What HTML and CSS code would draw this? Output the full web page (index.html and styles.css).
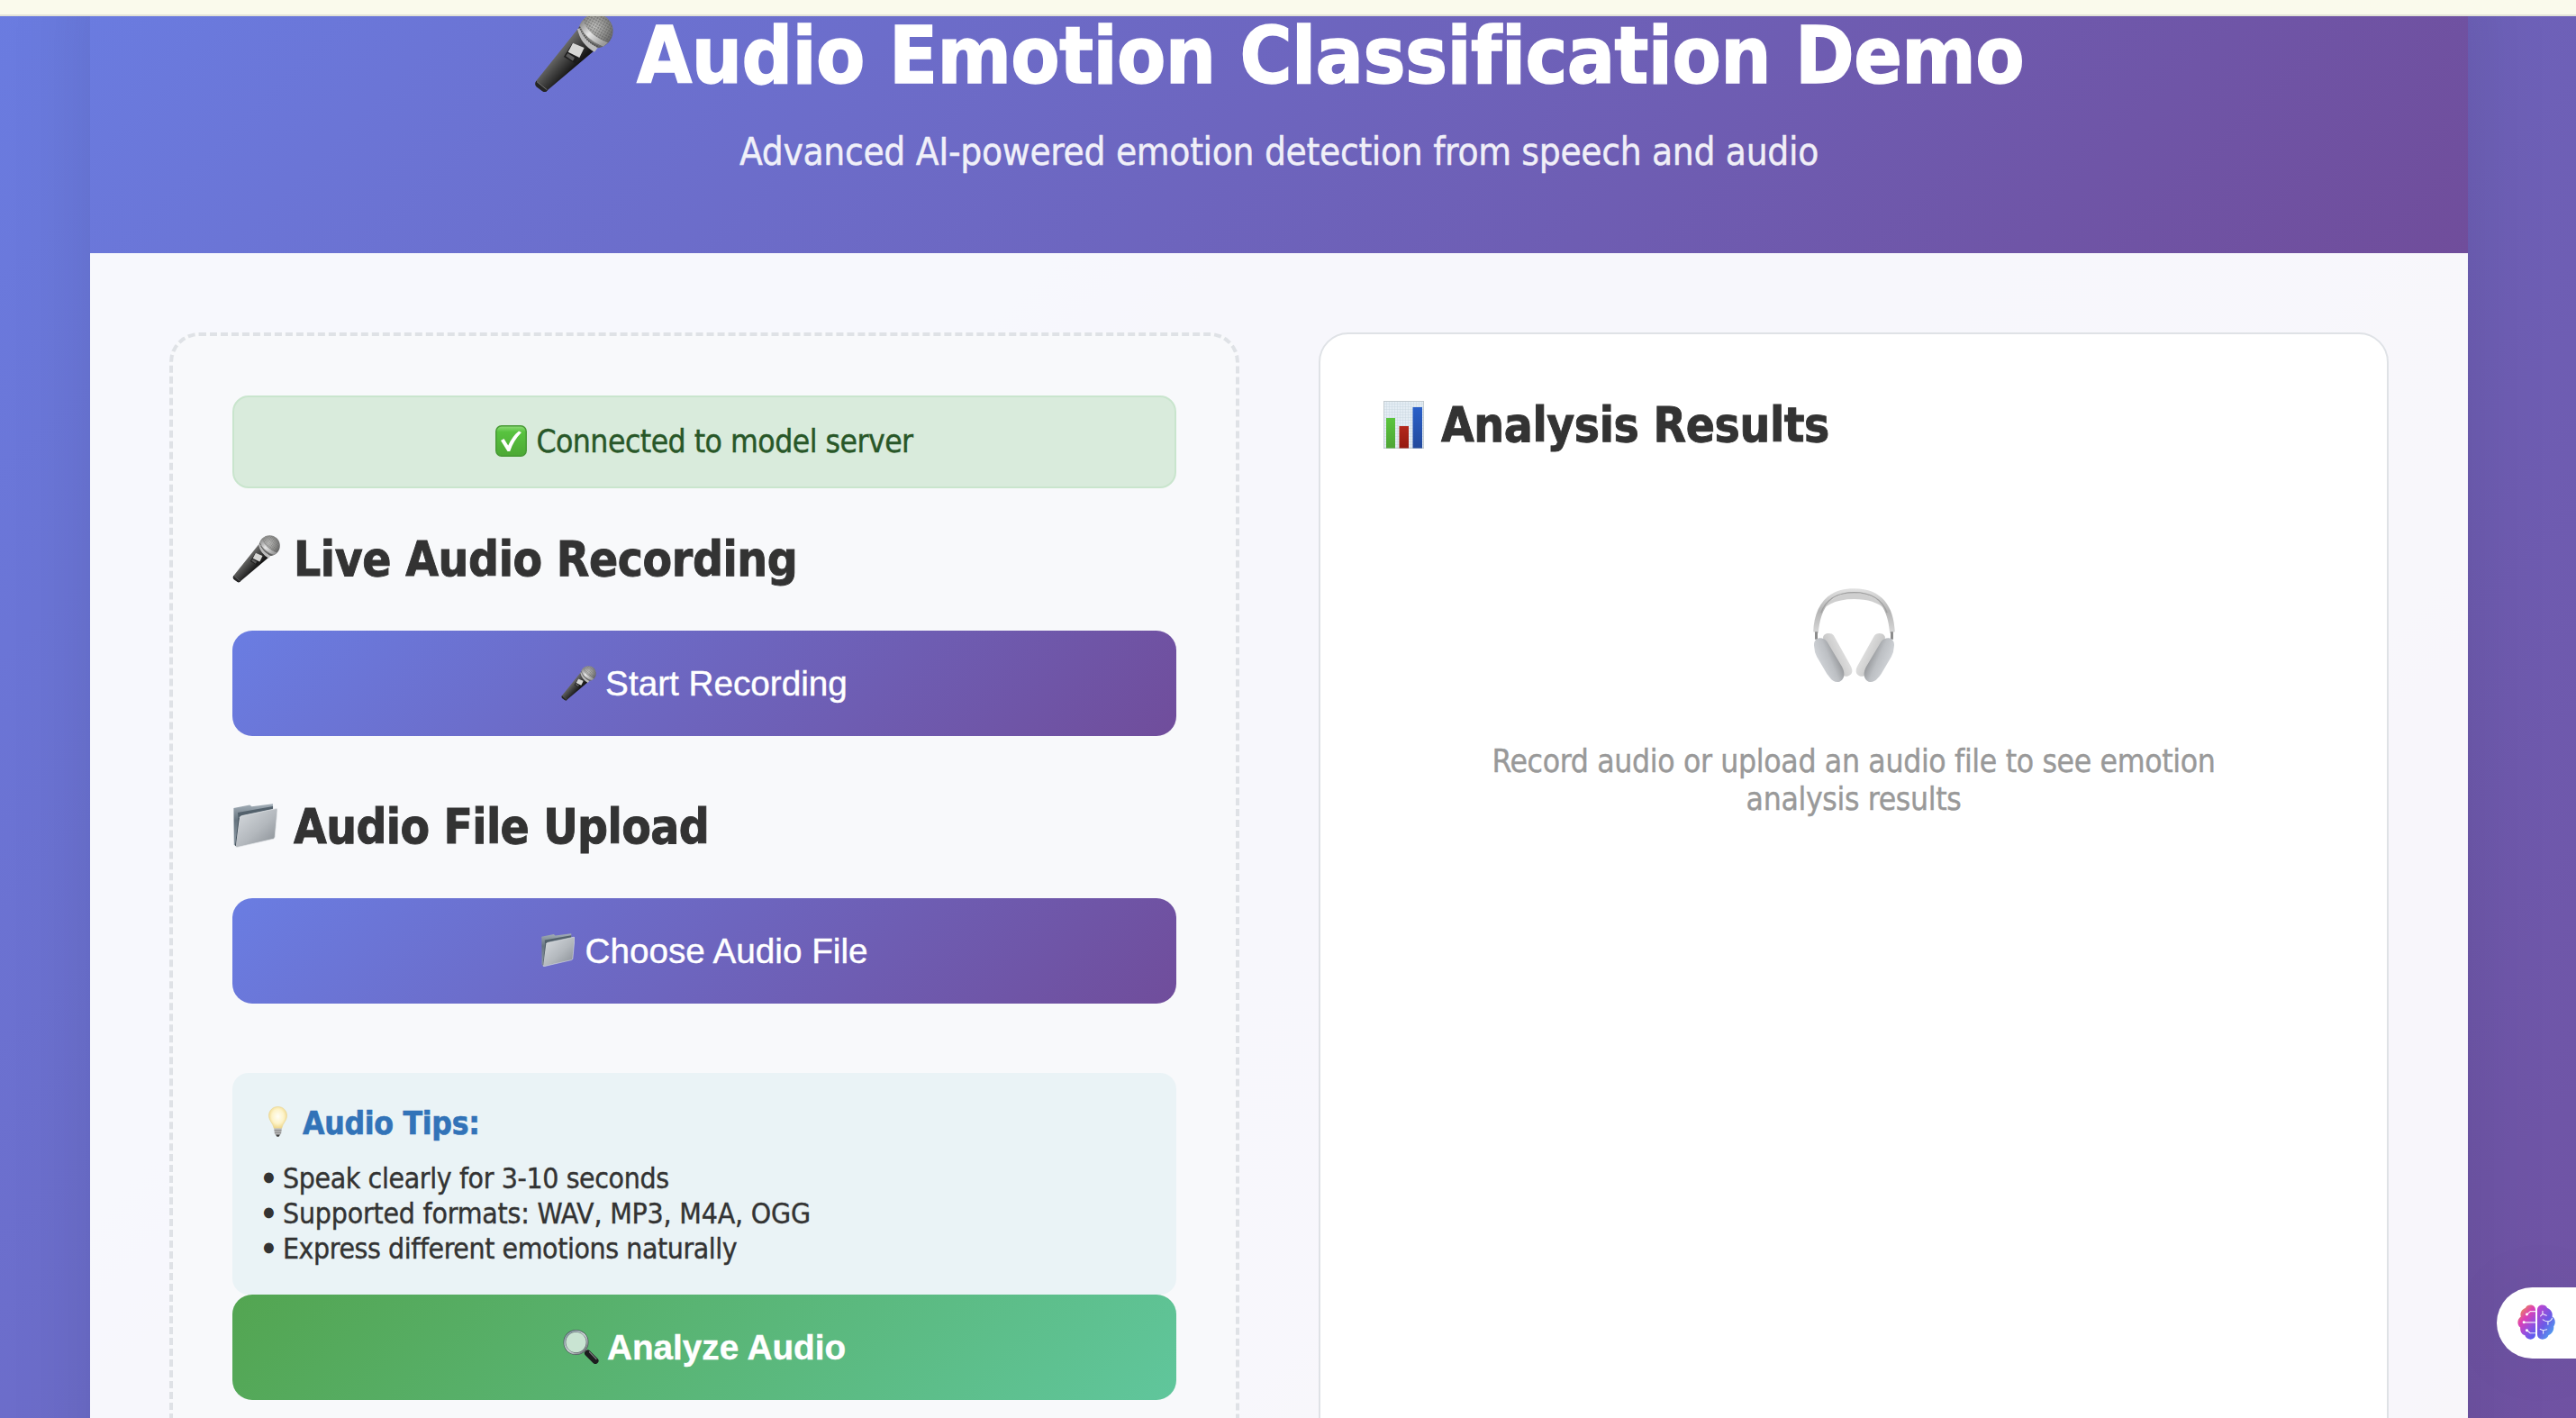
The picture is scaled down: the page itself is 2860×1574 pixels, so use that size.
FILE: index.html
```html
<!DOCTYPE html>
<html lang="en">
<head>
<meta charset="utf-8">
<title>Audio Emotion Classification Demo</title>
<link rel="stylesheet" href="styles.css">
</head>
<body>
<svg class="defs" width="0" height="0" aria-hidden="true">
  <defs>
    <linearGradient id="micBody" gradientUnits="userSpaceOnUse" x1="95" y1="165" x2="150" y2="215">
      <stop offset="0" stop-color="#6a6a68"/><stop offset=".35" stop-color="#4c4c4b"/><stop offset="1" stop-color="#161616"/>
    </linearGradient>
    <radialGradient id="micHead" gradientUnits="userSpaceOnUse" cx="235" cy="60" r="75">
      <stop offset="0" stop-color="#c2c2c0"/><stop offset=".6" stop-color="#8b8b89"/><stop offset="1" stop-color="#5e5e5e"/>
    </radialGradient>
    <linearGradient id="micRing" gradientUnits="userSpaceOnUse" x1="190" y1="45" x2="262" y2="120">
      <stop offset="0" stop-color="#8a8a8a"/><stop offset=".45" stop-color="#e6e6e6"/><stop offset="1" stop-color="#9a9a9a"/>
    </linearGradient>
    <pattern id="mesh" width="9" height="9" patternUnits="userSpaceOnUse" patternTransform="rotate(30)">
      <circle cx="3" cy="3" r="2.200" fill="#4b4b4b"/>
    </pattern>
    <linearGradient id="folderBack" x1="0" y1="0" x2="0" y2="1">
      <stop offset="0" stop-color="#a4afb8"/><stop offset=".4" stop-color="#66747f"/><stop offset="1" stop-color="#8f9ba5"/>
    </linearGradient>
    <linearGradient id="folderFront" x1="0" y1="0" x2="1" y2="1">
      <stop offset="0" stop-color="#d9dde1"/><stop offset=".55" stop-color="#b3b8bd"/><stop offset="1" stop-color="#858b91"/>
    </linearGradient>
    <symbol id="mic" viewBox="34 16 264 264">
      <path d="M184 62 L236 138 L80 270 Q72 281 61 274 L42 260 Q34 251 41 240 Z" fill="url(#micBody)"/>
      <path d="M41 240 L80 270 Q72 281 61 274 L42 260 Q34 251 41 240Z" fill="#252525"/>
      <path d="M43 243 L77 270" stroke="#777" stroke-width="3" fill="none"/>
      <circle cx="240" cy="74" r="57" fill="url(#micHead)"/>
      <circle cx="240" cy="74" r="56" fill="url(#mesh)"/>
      <path d="M197 37 Q214 88 280 113 L264 126 Q208 105 185 56Z" fill="url(#micRing)"/>
      <path d="M178 67 Q190 120 235 144 L246 130 Q204 110 188 66Z" fill="#bcbcbc"/>
      <path d="M185 60 Q202 108 249 128" stroke="#4b4b4b" stroke-width="5" stroke-dasharray="4 4" fill="none"/>
      <path d="M162 114 L202 130 L170 182 L133 160 Z" fill="#1b1b1b"/>
      <path d="M163 114 L201 130 L185 163 L147 144 Z" fill="#d6d6d4"/>
      <path d="M146 148 L169 163 L163 174 L139 158Z" fill="#5a5a5a"/>
    </symbol>
    <symbol id="folder" viewBox="19 32 49 49">
      <path d="M19.4 37 L37.3 33.4 L39.5 35.3 L63 32.3 L63.4 48 L23 78 L19.8 78Z" fill="url(#folderBack)"/>
      <path d="M24 42 L63 35 L63 46 L25 60Z" fill="#53616c"/>
      <path d="M28.5 45.6 L66.5 37.6 Q68.2 37.4 68 39 L65.2 69 Q65 70.6 63.5 71.2 L23 80.6 Q21 80.5 21.4 78 L26 48 Q26.5 46.1 28.500 45.600Z" fill="url(#folderFront)" stroke="#e6eaed" stroke-width=".7"/>
      <path d="M21.300 79 L25.300 48" stroke="#42505b" stroke-width="1"/>
    </symbol>
  </defs>
</svg>

<div class="browser-edge"></div>
<div class="page">
  <div class="container">
    <header class="header">
      <h1 class="title"><svg class="title-icon"><use href="#mic"/></svg><span>Audio Emotion Classification Demo</span></h1>
      <p class="subtitle">Advanced AI-powered emotion detection from speech and audio</p>
    </header>

    <main class="content">
      <section class="input-panel">
        <div class="status">
          <svg class="status-icon" viewBox="0 0 35 35">
            <defs><linearGradient id="tick" x1="0" y1="0" x2="0" y2="1"><stop offset="0" stop-color="#8fdc78"/><stop offset=".2" stop-color="#58c33f"/><stop offset="1" stop-color="#4ca834"/></linearGradient></defs>
            <rect x=".8" y=".8" width="33.400" height="33.400" rx="6" fill="url(#tick)" stroke="#479a35" stroke-width="1.500"/>
            <path d="M6 17 L9.500 15 L14.200 22.500 Q19 12 26 6.500 L29 8 Q20 17 16.200 29 L13.500 29 Z" fill="#fff"/>
          </svg>
          <span>Connected to model server</span>
        </div>

        <h2 class="heading"><svg class="heading-icon"><use href="#mic"/></svg><span>Live Audio Recording</span></h2>
        <button class="btn"><svg class="btn-icon"><use href="#mic"/></svg><span>Start Recording</span></button>

        <h2 class="heading heading-upload"><svg class="heading-icon folder"><use href="#folder"/></svg><span>Audio File Upload</span></h2>
        <button class="btn"><svg class="btn-icon folder"><use href="#folder"/></svg><span>Choose Audio File</span></button>

        <div class="tips">
          <h4 class="tips-title">
            <svg class="bulb" viewBox="0 0 21 34">
              <defs><radialGradient id="glow" cx=".5" cy=".45" r=".6"><stop offset="0" stop-color="#fffef6"/><stop offset=".55" stop-color="#fdf3c8"/><stop offset="1" stop-color="#ecd07a"/></radialGradient></defs>
              <path d="M10.500 .5 C16.500 .5 20.500 5 20.500 10.500 C20.500 16 15.500 19 14.800 24.500 L6.200 24.500 C5.500 19 .5 16 .5 10.500 C.5 5 4.500 .5 10.500 .5Z" fill="url(#glow)" stroke="#ead694" stroke-width=".7"/>
              <path d="M6.200 24.500 H14.800 L14 31 L12 32 H9 L7 31Z" fill="#b9b9b9"/>
              <path d="M6.500 26.800 H14.500 M6.800 29.300 H14.200" stroke="#838383" stroke-width=".9"/>
              <path d="M8 31.500 H13 L11.500 33.800 H9.500Z" fill="#3c3c3c"/>
            </svg>
            <span>Audio Tips:</span>
          </h4>
          <p class="tip tip-first"><span class="dot">•</span><span>Speak clearly for 3-10 seconds</span></p>
          <p class="tip tip-formats"><span class="dot">•</span><span>Supported formats: WAV, MP3, M4A, OGG</span></p>
          <p class="tip"><span class="dot">•</span><span>Express different emotions naturally</span></p>
        </div>

        <button class="btn btn-analyze">
          <svg class="btn-icon lens" viewBox="0 0 40 38">
            <defs><linearGradient id="rim" x1="0" y1="0" x2="1" y2="1"><stop offset="0" stop-color="#6f8d96"/><stop offset=".5" stop-color="#dde4e6"/><stop offset="1" stop-color="#5c6266"/></linearGradient></defs>
            <path d="M25 23 L29 27" stroke="#c9cdd0" stroke-width="4"/>
            <path d="M27.500 26 L36 34.500" stroke="#1d1d1f" stroke-width="7" stroke-linecap="round"/>
            <path d="M29.500 24.800 L37 32.500" stroke="#77777a" stroke-width="1.300" stroke-linecap="round"/>
            <circle cx="14.500" cy="14" r="12.600" fill="#c9e4d2" stroke="#51585d" stroke-width="2.800"/>
            <circle cx="14.500" cy="14" r="12.500" fill="none" stroke="url(#rim)" stroke-width="1.600"/>
          </svg>
          <span>Analyze Audio</span>
        </button>
      </section>

      <section class="results-panel">
        <h2 class="heading">
          <svg class="chart-icon" viewBox="0 0 45 53">
            <defs>
              <pattern id="grid" width="3" height="3" patternUnits="userSpaceOnUse"><rect width="3" height="3" fill="#e4edf4"/><path d="M0 0H3M0 0V3" stroke="#c6d5e0" stroke-width=".8"/></pattern>
              <linearGradient id="g1" x1="0" y1="0" x2="0" y2="1"><stop offset="0" stop-color="#5ac53d"/><stop offset="1" stop-color="#4fa535"/></linearGradient>
              <linearGradient id="g2" x1="0" y1="0" x2="0" y2="1"><stop offset="0" stop-color="#b3271b"/><stop offset="1" stop-color="#94190f"/></linearGradient>
              <linearGradient id="g3" x1="0" y1="0" x2="0" y2="1"><stop offset="0" stop-color="#2a60c9"/><stop offset="1" stop-color="#22499c"/></linearGradient>
            </defs>
            <rect width="45" height="53" fill="#bfc6cb"/>
            <rect x=".8" y=".8" width="43.400" height="51.400" fill="url(#grid)"/>
            <rect x="3" y="19" width="10" height="33.500" fill="url(#g1)"/>
            <rect x="17.500" y="28" width="10.500" height="24.500" fill="url(#g2)"/>
            <rect x="32.500" y="7" width="10.500" height="45.500" fill="url(#g3)"/>
          </svg>
          <span>Analysis Results</span>
        </h2>
        <div class="empty">
          <svg class="headphones" viewBox="158 68 272 312">
            <defs>
              <linearGradient id="band" x1="0" y1="0" x2="0" y2="1"><stop offset="0" stop-color="#e2e2e2"/><stop offset=".5" stop-color="#b4b4b4"/><stop offset="1" stop-color="#d8d8d8"/></linearGradient>
              <linearGradient id="cupL" gradientUnits="userSpaceOnUse" x1="170" y1="300" x2="240" y2="270"><stop offset="0" stop-color="#d0d3d7"/><stop offset=".5" stop-color="#bcbfc3"/><stop offset="1" stop-color="#8a8c8f"/></linearGradient>
              <linearGradient id="padL" gradientUnits="userSpaceOnUse" x1="205" y1="310" x2="270" y2="280"><stop offset="0" stop-color="#a4a4a4"/><stop offset=".3" stop-color="#c9c9c9"/><stop offset="1" stop-color="#e2e2e2"/></linearGradient>
            </defs>
            <path d="M190 138 Q225 84 294 82 Q363 84 398 138 Q362 104 294 104 Q226 104 190 138Z" fill="#cfcfcf"/>
            <path d="M158 213 C162 130 200 69 294 69 C388 69 426 130 430 213 L413 218 C409 165 392 83 294 83 C196 83 179 165 175 218Z" fill="url(#band)"/>
            <path d="M184 150 C200 105 240 82 294 82 C348 82 388 105 404 150" fill="none" stroke="#a0a0a0" stroke-width="4"/>
            <path d="M168 213 V238 M420 213 V238" stroke="#8c8c8c" stroke-width="9"/>
            <g id="cup">
              <path d="M192 238 C184 220 213 210 226 225 L282 325 C298 352 277 366 258 360 L225 345Z" fill="url(#padL)"/>
              <path d="M161 262 C156 232 188 224 204 246 L254 330 C270 360 254 382 238 380 C222 380 213 365 204 354 L170 296 Q162 282 161 262Z" fill="url(#cupL)"/>
            </g>
            <use href="#cup" transform="translate(588 0) scale(-1 1)"/>
          </svg>
          <p class="empty-text">Record audio or upload an audio file to see emotion<br>analysis results</p>
        </div>
      </section>
    </main>
  </div>
</div>

<div class="assistant-tab">
  <svg class="brain" viewBox="285 204 126 118">
    <defs>
      <linearGradient id="brainL" x1=".15" y1="0" x2=".75" y2="1"><stop offset="0" stop-color="#eaa33c"/><stop offset=".38" stop-color="#df3fb4"/><stop offset=".7" stop-color="#9a4fdd"/><stop offset="1" stop-color="#5b5cf0"/></linearGradient>
      <linearGradient id="brainR" x1=".1" y1="0" x2=".9" y2="1"><stop offset="0" stop-color="#c243cf"/><stop offset=".5" stop-color="#6b5ae6"/><stop offset="1" stop-color="#47b4f3"/></linearGradient>
    </defs>
    <path d="M345 222 C345 203 318 200 311 216 C298 220 292 234 296 245 C283 253 282 273 294 281 C293 295 299 305 309 307 C315 326 345 326 345 304Z" fill="url(#brainL)"/>
    <path d="M351 222 C351 203 378 200 385 216 C397 220 404 232 401 245 C412 250 414 268 406 277 C408 290 401 303 389 307 C383 326 351 326 351 304Z" fill="url(#brainR)"/>
    <g fill="none" stroke="#fff" stroke-width="3.500" stroke-linecap="round" opacity=".88">
      <path d="M345 227 H328 L317 237 M345 264 H306 M345 300 H327 L317 291"/>
      <path d="M369 226 V236 L362 243 M369 236 L382 241 M370 255 Q378 261 387 261 Q398 260 401 250 M387 261 V271 M361 287 L371 291 L383 288 M371 291 V301"/>
    </g>
    <g fill="#fff"><circle cx="316" cy="237" r="4.500"/><circle cx="306" cy="264" r="4.500"/><circle cx="316" cy="291" r="4.500"/></g>
  </svg>
</div>
</body>
</html>
```
FILE: styles.css
```css
* {
  box-sizing: border-box;
  margin: 0;
  padding: 0;
}

body {
  height: 1574px;
  overflow: hidden;
  display: flex;
  flex-direction: column;
  position: relative;
  font-family: "DejaVu Sans Condensed", "DejaVu Sans", sans-serif;
  color: #333;
  -webkit-text-stroke: 0.4px currentColor;
}

.defs {
  position: absolute;
}

svg {
  display: block;
  flex: none;
}

.browser-edge {
  height: 18px;
  flex: none;
  background: #fafaec;
  border-bottom: 2px solid #e2e2d7;
}

/* the page is scrolled down slightly, so its top is cut off */
.page {
  flex: 1;
  min-height: 0;
  overflow: hidden;
  padding: 0 120px 0 100px;
  background: linear-gradient(135deg, #6a7de2 0%, #704d9b 100%) 0 -146px / 100% 2200px no-repeat;
}

.container {
  height: 1960px;
  margin-top: -102px;
  background: rgba(255, 255, 255, 0.95);
  box-shadow: 0 44px 88px rgba(0, 0, 0, 0.1);
}

.header {
  height: 365px;
  padding-top: 88px;
  background: linear-gradient(135deg, #6a7de2 0%, #704d9b 100%);
  color: #fff;
  text-align: center;
}

.title {
  display: flex;
  justify-content: center;
  gap: 26px;
  font-size: 88px;
  line-height: 115px;
  letter-spacing: -0.58px;
  white-space: nowrap;
  -webkit-text-stroke-width: 1.4px;
}

.title-icon {
  width: 88px;
  height: 88px;
  margin-top: 11px;
}

.subtitle {
  margin-top: 25px;
  font-size: 42px;
  line-height: 50px;
  letter-spacing: -0.32px;
  opacity: 0.9;
}

.content {
  display: grid;
  grid-template-columns: 1fr 1fr;
  gap: 88px;
  padding: 88px;
  height: 1595px;
}

.input-panel,
.results-panel {
  border-radius: 33px;
}

.input-panel {
  padding: 66px;
  background: #f8f9fb;
  border: 4px dashed #dfe2e6;
}

.results-panel {
  padding: 69px 66px;
  background: #fff;
  border: 2px solid #dfe2e6;
}

.status {
  display: flex;
  align-items: center;
  justify-content: center;
  gap: 10px;
  height: 103px;
  margin-bottom: 47px;
  padding-bottom: 2px;
  background: #d9ebdc;
  border: 2px solid #c9e5cd;
  border-radius: 18px;
  color: #285728;
  font-size: 35.2px;
  line-height: 42px;
  letter-spacing: -0.52px;
}

.status-icon {
  width: 35px;
  height: 35px;
  margin-top: -1px;
}

.heading {
  display: flex;
  align-items: center;
  height: 64px;
  margin-bottom: 47px;
  font-size: 52.8px;
  line-height: 64px;
  letter-spacing: -0.4px;
  white-space: nowrap;
  -webkit-text-stroke-width: 0.9px;
}

.heading-upload {
  margin-top: 69px;
  letter-spacing: -0.6px;
}

.heading-icon {
  width: 53px;
  height: 53px;
  margin: -1px 15px 0 0;
}

.heading-icon.folder {
  width: 49px;
  height: 49px;
  margin: -4px 18px 0 1px;
}

.chart-icon {
  width: 45px;
  height: 53px;
  margin: -1px 19px 0 4px;
}

.btn {
  display: flex;
  align-items: center;
  justify-content: center;
  gap: 10px;
  width: 100%;
  height: 117px;
  border: 0;
  border-radius: 22px;
  background: linear-gradient(135deg, #6a7de2 0%, #704d9b 100%);
  color: #fff;
  font: 38.7px/46px "Liberation Sans", Arial, sans-serif;
}

.btn-icon {
  width: 39px;
  height: 39px;
}

.btn-icon.folder {
  width: 37px;
  height: 37px;
  margin-right: 2px;
  margin-top: -3px;
}

.btn-icon.lens {
  width: 40px;
  height: 38px;
  margin: -2px -1px 0 0;
}

.btn-analyze {
  font-weight: bold;
  background: linear-gradient(135deg, #53a551 0%, #60c69c 100%);
}

.tips {
  height: 246px;
  margin-top: 77px;
  padding: 35px 33px 31px;
  background: #eaf3f6;
  border-radius: 18px;
}

.tips-title {
  display: flex;
  margin-bottom: 21px;
  padding-left: 7px;
  color: #3273b8;
  font-size: 35.2px;
  line-height: 42px;
  letter-spacing: -0.3px;
  -webkit-text-stroke-width: 0.6px;
}

.bulb {
  width: 21px;
  height: 34px;
  margin: 2px 17px 0 0;
}

.tip {
  display: flex;
  font-size: 31.7px;
  line-height: 39px;
  letter-spacing: -0.4px;
}

.tip-first {
  letter-spacing: -0.36px;
}

.tip-formats {
  letter-spacing: -0.18px;
}

.dot {
  width: 24px;
  margin-left: -1px;
  -webkit-text-stroke-width: 2.6px;
}

.empty {
  display: flex;
  flex-direction: column;
  align-items: center;
  padding-top: 102px;
}

.headphones {
  width: 91px;
  height: 104px;
}

.empty-text {
  margin-top: 67px;
  color: #999;
  font-size: 35.2px;
  line-height: 42px;
  letter-spacing: -0.34px;
  text-align: center;
  white-space: nowrap;
}

/* floating assistant tab docked to the right edge of the window */
.assistant-tab {
  position: absolute;
  right: 0;
  top: 1429px;
  width: 88px;
  height: 79px;
  padding: 19px 0 0 23px;
  background: #fff;
  border-radius: 40px 0 0 40px;
  box-shadow: 0 0 80px rgba(0, 0, 0, 0.05);
}

.brain {
  width: 42px;
  height: 39px;
}
```
